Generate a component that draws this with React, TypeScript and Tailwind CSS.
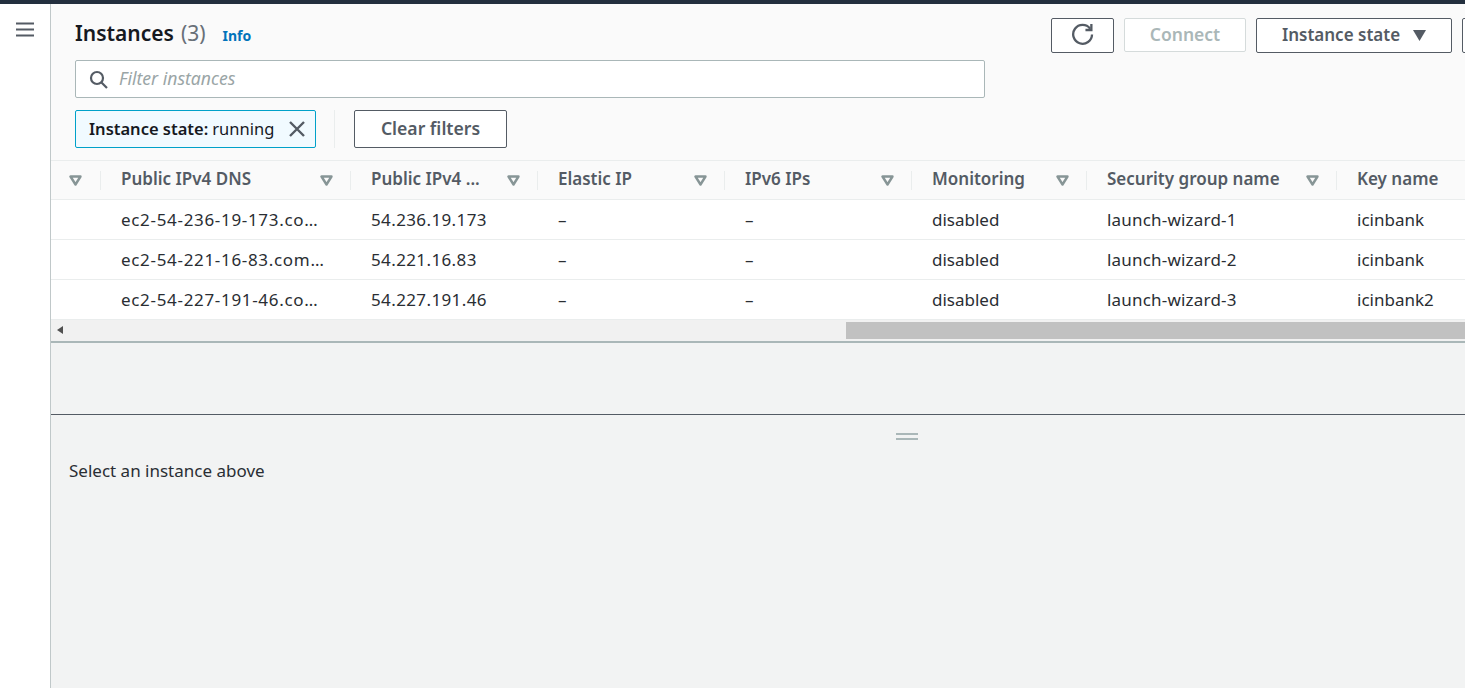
const columns = [
  { label: '', width: 'w-[50px]', pad: 'pr-[19px]', cell: '' },
  { label: 'Public IPv4 DNS', width: 'w-[250px]', pad: 'pr-[18px]', cell: 'tracking-[0.68px]' },
  { label: 'Public IPv4 ...', width: 'w-[187px]', pad: 'pr-[18px]', cell: 'tracking-[0.38px]' },
  { label: 'Elastic IP', width: 'w-[187px]', pad: 'pr-[18px]', cell: '' },
  { label: 'IPv6 IPs', width: 'w-[187px]', pad: 'pr-[18px]', cell: '' },
  { label: 'Monitoring', width: 'w-[175px]', pad: 'pr-[18px]', cell: '' },
  { label: 'Security group name', width: 'w-[250px]', pad: 'pr-[18px]', cell: 'tracking-[0.2px]' },
  { label: 'Key name', width: 'w-[128px]', pad: 'pr-[18px]', cell: '' },
];

const rows = [
  ['', 'ec2-54-236-19-173.co…', '54.236.19.173', '–', '–', 'disabled', 'launch-wizard-1', 'icinbank'],
  ['', 'ec2-54-221-16-83.com…', '54.221.16.83', '–', '–', 'disabled', 'launch-wizard-2', 'icinbank'],
  ['', 'ec2-54-227-191-46.co…', '54.227.191.46', '–', '–', 'disabled', 'launch-wizard-3', 'icinbank2'],
];

function SortIcon() {
  return (
    <svg width="13" height="11" viewBox="0 0 13 11" className="shrink-0">
      <path d="M1.5 1.5h10L6.5 9.5z" fill="none" stroke="#879596" strokeWidth="2.4" strokeLinejoin="round" />
    </svg>
  );
}

export default function App() {
  return (
    <div className="h-[688px] w-[1465px] overflow-hidden bg-white font-['Noto_Sans',sans-serif] text-[17px] text-[#16191f]">
      <div className="h-1 bg-[#232f3e]" />
      <div className="flex h-[684px]">
        {/* Side nav */}
        <div className="w-[51px] shrink-0 border-r border-[#c0c8c9] bg-white pt-[18px] pl-4">
          <svg width="18" height="15" viewBox="0 0 18 15">
            <path d="M0 1.5h18M0 7.5h18M0 13.5h18" stroke="#545b64" strokeWidth="2" />
          </svg>
        </div>

        <div className="flex w-[1414px] flex-col">
          {/* Header */}
          <div className="flex h-[157px] shrink-0 border-b border-[#eaeded] bg-[#fafafa]">
            <div className="w-[1000px] shrink-0 pl-6">
              <div className="flex h-[56px] items-center pt-[2px]">
                <span className="text-[21px] leading-[28px] font-semibold text-[#16191f]">Instances</span>
                <span className="ml-[7px] text-[21px] leading-[28px] text-[#687078]">(3)</span>
                <span className="ml-[17px] pt-[5px] text-[14px] font-bold text-[#0073bb]">Info</span>
              </div>
              <div className="flex h-[38px] w-[910px] items-center rounded-[2px] border border-[#aab7b8] bg-white pl-[13px]">
                <svg width="19" height="19" viewBox="0 0 19 19" fill="none" stroke="#545b64" strokeWidth="2.2">
                  <circle cx="8" cy="8" r="6" />
                  <path d="M12.5 12.5L18 18" />
                </svg>
                <span className="ml-[11px] pb-[2px] text-[17.6px] text-[#9aa5a6] italic">Filter instances</span>
              </div>
              <div className="mt-3 flex items-center">
                <div className="flex h-[38px] w-[241px] items-center rounded-[2px] border border-[#00a1c9] bg-[#f1faff] pl-[13px] text-[16.5px]">
                  <span className="font-semibold text-[#16191f]">Instance state:</span>
                  <span className="ml-1 text-[#16191f]">running</span>
                  <svg width="18" height="18" viewBox="0 0 18 18" className="ml-[14px]">
                    <path d="M2 2l14 14M16 2L2 16" stroke="#545b64" strokeWidth="2.4" />
                  </svg>
                </div>
                <div className="ml-[18px] h-[38px] w-px bg-[#eaeded]" />
                <button className="ml-[19px] h-[38px] w-[153px] rounded-[2px] border border-[#545b64] bg-white pb-[2px] text-[17.6px] font-semibold text-[#545b64]">
                  Clear filters
                </button>
              </div>
            </div>
            <div className="flex shrink-0 items-start gap-[10px] pt-[14px]">
              <button className="flex h-[35px] w-[63px] items-center justify-center rounded-[2px] border border-[#545b64] bg-white pb-[2px]">
                <svg width="23" height="23" viewBox="0 0 21 21" fill="none" stroke="#545b64" strokeWidth="2.1">
                  <path d="M17.5 5.2A8.6 8.6 0 1 0 19.2 10.5" />
                  <path d="M18.6 1v5.4h-5.4" />
                </svg>
              </button>
              <button className="h-[34px] w-[122px] rounded-[2px] border border-[#d5dbdb] bg-white pb-[2px] text-[17.5px] font-semibold text-[#aab7b8]">
                Connect
              </button>
              <button className="flex h-[35px] w-[196px] items-center justify-center gap-[13px] rounded-[2px] border border-[#545b64] bg-white pb-[2px] font-semibold text-[#545b64]">
                Instance state
                <svg width="13" height="11" viewBox="0 0 13 11" className="mt-[2px]">
                  <path d="M0 0h13L6.5 11z" fill="#545b64" />
                </svg>
              </button>
              <div className="h-[35px] w-[40px] rounded-[2px] border border-[#545b64] bg-white" />
            </div>
          </div>

          {/* Table */}
          <div className="flex h-[39px] shrink-0 border-b border-[#eaeded] bg-[#fafafa]">
            {columns.map((col, index) => (
              <div key={index} className={`${col.width} ${col.pad} flex shrink-0 items-center justify-between`}>
                {index > 0 ? (
                  <div className="-ml-px flex h-[19px] items-center border-l border-[#eaeded] pb-[2px] pl-5 font-semibold whitespace-nowrap text-[#545b64]">
                    {col.label}
                  </div>
                ) : (
                  <div />
                )}
                {index < columns.length - 1 && <SortIcon />}
              </div>
            ))}
          </div>
          {rows.map((row, i) => (
            <div key={i} className="flex h-10 shrink-0 items-center border-b border-[#eaeded] bg-white">
              {row.map((cell, j) => (
                <div key={j} className={`${columns[j].width} ${columns[j].cell} shrink-0 truncate pl-5 text-[#2a2e33]`}>
                  {cell}
                </div>
              ))}
            </div>
          ))}

          {/* Horizontal scrollbar */}
          <div className="flex h-[23px] shrink-0 items-start border-b-2 border-[#aab7b8] bg-[#f1f1f1]">
            <div className="flex h-[20px] w-[795px] shrink-0 items-center pl-[6px]">
              <svg width="6" height="8" viewBox="0 0 6 8">
                <path d="M6 0v8L0 4z" fill="#505050" />
              </svg>
            </div>
            <div className="mt-[2px] h-[17px] flex-1 bg-[#c1c1c1]" />
          </div>

          {/* Split panel */}
          <div className="h-[72px] shrink-0 border-b border-[#545b64] bg-[#f2f3f3]" />
          <div className="flex-1 bg-[#f2f3f3] pl-[18px]">
            <div className="flex h-[43px] justify-center pt-[18px] pl-[280px]">
              <div className="h-[7px] w-[22px] border-y-2 border-[#aab7b8]" />
            </div>
            <div className="text-[#2a2e33]">Select an instance above</div>
          </div>
        </div>
      </div>
    </div>
  );
}
